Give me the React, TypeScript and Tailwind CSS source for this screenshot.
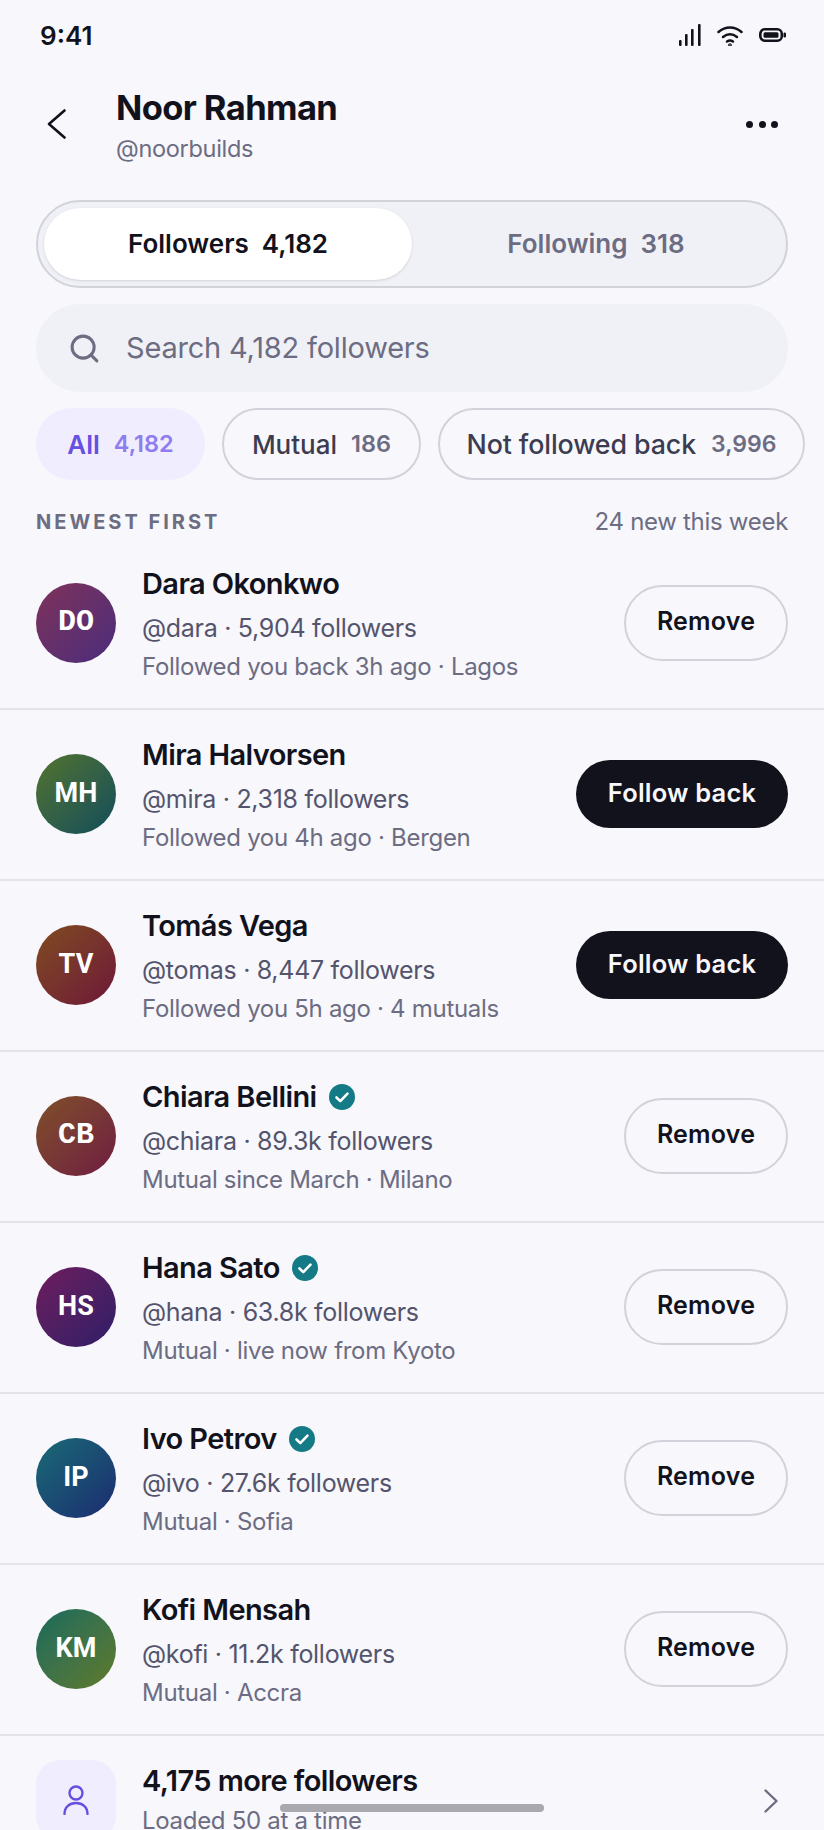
import { Search } from "lucide-react";

const SANS = "font-['Roboto',sans-serif] text-[27px] tracking-[0.2px]";
const SLAB = "font-['Liberation_Mono',monospace] text-[30px]";

const people = [
  { initials: "DO", font: SLAB, name: "Dara Okonkwo", handle: "@dara · 5,904 followers", meta: "Followed you back 3h ago · Lagos", grad: "from-[#7f3058] to-[#4b2a7c]", action: "Remove" },
  { initials: "MH", font: SANS, name: "Mira Halvorsen", handle: "@mira · 2,318 followers", meta: "Followed you 4h ago · Bergen", grad: "from-[#537326] to-[#0e4c58]", action: "Follow back" },
  { initials: "TV", font: SANS, name: "Tomás Vega", handle: "@tomas · 8,447 followers", meta: "Followed you 5h ago · 4 mutuals", grad: "from-[#7f4a1c] to-[#6e1436]", action: "Follow back" },
  { initials: "CB", font: SLAB, name: "Chiara Bellini", handle: "@chiara · 89.3k followers", meta: "Mutual since March · Milano", grad: "from-[#7f4f26] to-[#6f1a3f]", verified: true, action: "Remove" },
  { initials: "HS", font: SANS, name: "Hana Sato", handle: "@hana · 63.8k followers", meta: "Mutual · live now from Kyoto", grad: "from-[#6e1a5c] to-[#2f1c68]", verified: true, action: "Remove" },
  { initials: "IP", font: SANS, name: "Ivo Petrov", handle: "@ivo · 27.6k followers", meta: "Mutual · Sofia", grad: "from-[#1a6a74] to-[#1c2a70]", verified: true, action: "Remove" },
  { initials: "KM", font: SANS, name: "Kofi Mensah", handle: "@kofi · 11.2k followers", meta: "Mutual · Accra", grad: "from-[#0e6a5c] to-[#5f7a26]", action: "Remove" },
];

const Verified = () => (
  <svg width="26" height="26" viewBox="0 0 26 26" className="shrink-0">
    <circle cx="13" cy="13" r="13" fill="#147a86" />
    <path d="M7.5 13.5l3.8 3.6 7.2-7.4" fill="none" stroke="#fff" strokeWidth="2.6" strokeLinecap="round" strokeLinejoin="round" />
  </svg>
);

const Row = ({ p }: { p: (typeof people)[number] }) => (
  <div className="flex h-[171px] items-center border-b-2 border-[#e3e3ea] pb-[2px] pl-9 pr-9">
    <div className={`flex h-20 w-20 shrink-0 items-center justify-center rounded-full bg-gradient-to-br ${p.grad} ${p.font} font-bold text-white`}>
      {p.initials}
    </div>
    <div className="ml-[26px] min-w-0 flex-1 pt-1">
      <div className="flex items-center gap-3 text-[29px] leading-[38px] font-semibold tracking-[-0.6px] text-[#12121c]">
        {p.name}
        {p.verified && <Verified />}
      </div>
      <div className="mt-[7px] text-[25px] leading-[36px] tracking-[-0.3px] text-[#54546c]">{p.handle}</div>
      <div className="mt-[4px] text-[24px] leading-[34px] tracking-[-0.3px] text-[#6c6c82]">{p.meta}</div>
    </div>
    {p.action === "Remove" ? (
      <div className="flex h-[76px] w-[164px] items-center justify-center rounded-full border-2 border-[#d2d2da] pb-[2px] text-[25px] font-semibold tracking-[0.2px] text-[#12121c]">
        Remove
      </div>
    ) : (
      <div className="flex h-[68px] w-[212px] items-center justify-center rounded-full bg-[#12121c] pb-[1px] text-[25.5px] font-semibold tracking-[0.2px] text-[#f7f7fc]">
        Follow back
      </div>
    )}
  </div>
);

export default function App() {
  return (
    <div className="relative h-[1830px] w-[824px] overflow-hidden bg-[#f7f7fc] font-['Inter',sans-serif]">
      <div className="flex h-[70px] items-center justify-between pl-10 pr-[38px]">
        <span className="text-[26px] font-semibold text-[#12121c]">9:41</span>
        <div className="flex items-center gap-[16px]">
          <svg width="22" height="22" viewBox="0 0 22 22" fill="#12121c">
            <rect x="0" y="16" width="2.6" height="6" rx="1" />
            <rect x="6" y="10" width="2.6" height="12" rx="1" />
            <rect x="12" y="5" width="2.6" height="17" rx="1" />
            <rect x="19" y="0" width="2.6" height="22" rx="1" />
          </svg>
          <svg width="26" height="21" viewBox="0 0 26 21" fill="none" stroke="#12121c" strokeWidth="2.5" strokeLinecap="round">
            <path d="M1.5 7c7-6 16-6 23 0" />
            <path d="M6 12c4.4-3.5 9.6-3.5 14 0" />
            <path d="M10 16.5c2-1.3 4-1.3 6 0" />
            <circle cx="13" cy="20" r="0.6" fill="#12121c" />
          </svg>
          <svg width="27" height="14" viewBox="0 0 27 14">
            <rect x="1.3" y="1.3" width="21.5" height="11.4" rx="4.5" fill="none" stroke="#12121c" strokeWidth="2.6" />
            <rect x="4.5" y="4.2" width="15" height="5.6" rx="1.5" fill="#12121c" />
            <rect x="24.5" y="4.5" width="2.5" height="5" rx="1.2" fill="#12121c" />
          </svg>
        </div>
      </div>

      <div className="flex h-[108px] items-center pl-[47px] pr-[46px]">
        <svg width="19" height="30" viewBox="0 0 19 30" fill="none" stroke="#12121c" strokeWidth="2.6" strokeLinecap="round" strokeLinejoin="round" className="shrink-0">
          <path d="M17.5 1.5L2 15l15.5 13.5" />
        </svg>
        <div className="ml-[50px] flex-1">
          <div className="mt-[1px] text-[34.5px] leading-[46px] font-bold tracking-[-0.6px] text-[#12121c]">Noor Rahman</div>
          <div className="mt-[3px] text-[23.5px] leading-[30px] tracking-[-0.3px] text-[#6c6c82]">@noorbuilds</div>
        </div>
        <div className="flex gap-[5.5px]">
          <span className="h-[7px] w-[7px] rounded-full bg-[#12121c]" />
          <span className="h-[7px] w-[7px] rounded-full bg-[#12121c]" />
          <span className="h-[7px] w-[7px] rounded-full bg-[#12121c]" />
        </div>
      </div>

      <div className="mx-9 mt-[22px] flex h-[88px] rounded-full border-2 border-[#d2d2da] bg-[#f0f1f6] p-[6px]">
        <div className="flex w-[368px] items-center justify-center gap-[13px] rounded-full bg-white pb-[2px] text-[26px] font-semibold text-[#12121c] shadow-sm">
          <span>Followers</span><span>4,182</span>
        </div>
        <div className="flex flex-1 items-center justify-center gap-[13px] pb-[2px] text-[26px] font-semibold text-[#6c6c82]">
          <span>Following</span><span>318</span>
        </div>
      </div>

      <div className="mx-9 mt-4 flex h-[88px] items-center rounded-full bg-[#f0f1f6] pl-[32px]">
        <Search size={33} strokeWidth={2.2} className="text-[#6c6c82]" />
        <span className="ml-[25px] text-[29px] tracking-[-0.2px] text-[#6c6c82]">Search 4,182 followers</span>
      </div>

      <div className="ml-9 mt-4 flex gap-[17px]">
        <div className="flex h-[72px] w-[169px] items-center justify-center gap-[14px] rounded-full bg-[#f0edff]">
          <span className="text-[26px] font-semibold text-[#6650e0]">All</span>
          <span className="text-[23.5px] font-semibold text-[#8f7df0]">4,182</span>
        </div>
        <div className="flex h-[72px] w-[199px] items-center justify-center gap-[14px] rounded-full border-2 border-[#d2d2da]">
          <span className="text-[26px] font-medium text-[#3c3c50]">Mutual</span>
          <span className="text-[23.5px] font-semibold text-[#6c6c82]">186</span>
        </div>
        <div className="flex h-[72px] w-[367px] items-center justify-center gap-[15px] whitespace-nowrap rounded-full border-2 border-[#d2d2da]">
          <span className="text-[26.8px] font-medium tracking-[-0.1px] text-[#3c3c50]">Not followed back</span>
          <span className="text-[23px] font-semibold text-[#6c6c82]">3,996</span>
        </div>
      </div>

      <div className="mx-9 mt-[27px] flex h-[30px] items-center justify-between">
        <span className="text-[20px] font-bold tracking-[3px] text-[#6c6c82]">NEWEST FIRST</span>
        <span className="text-[24px] tracking-[-0.3px] text-[#6c6c82]">24 new this week</span>
      </div>

      <div className="mt-[2px]">
        {people.map((p) => (
          <Row key={p.initials} p={p} />
        ))}
      </div>

      <div className="flex items-center pl-9 pr-[46px] pt-[24px]">
        <div className="flex h-20 w-20 shrink-0 items-center justify-center rounded-[24px] bg-[#f0edff]">
          <svg width="26" height="30" viewBox="0 0 26 30" fill="none" stroke="#6650e0" strokeWidth="2.4" strokeLinecap="round">
            <circle cx="13" cy="8" r="6.5" />
            <path d="M1.5 29c0-7 5-11 11.5-11s11.5 4 11.5 11" />
          </svg>
        </div>
        <div className="ml-[26px] flex-1">
          <div className="text-[29px] leading-[38px] font-semibold tracking-[-0.6px] text-[#12121c]">4,175 more followers</div>
          <div className="mt-[4px] text-[24px] leading-[34px] tracking-[-0.3px] text-[#6c6c82]">Loaded 50 at a time</div>
        </div>
        <svg width="14" height="24" viewBox="0 0 14 24" fill="none" stroke="#6c6c82" strokeWidth="2.4" strokeLinecap="round" strokeLinejoin="round" className="mt-[2px] shrink-0">
          <path d="M1.5 1.5L12.5 12 1.5 22.5" />
        </svg>
      </div>

      <div className="absolute bottom-[18px] left-[280px] h-2 w-[264px] rounded-full bg-[#a8a8ae]" />
    </div>
  );
}
